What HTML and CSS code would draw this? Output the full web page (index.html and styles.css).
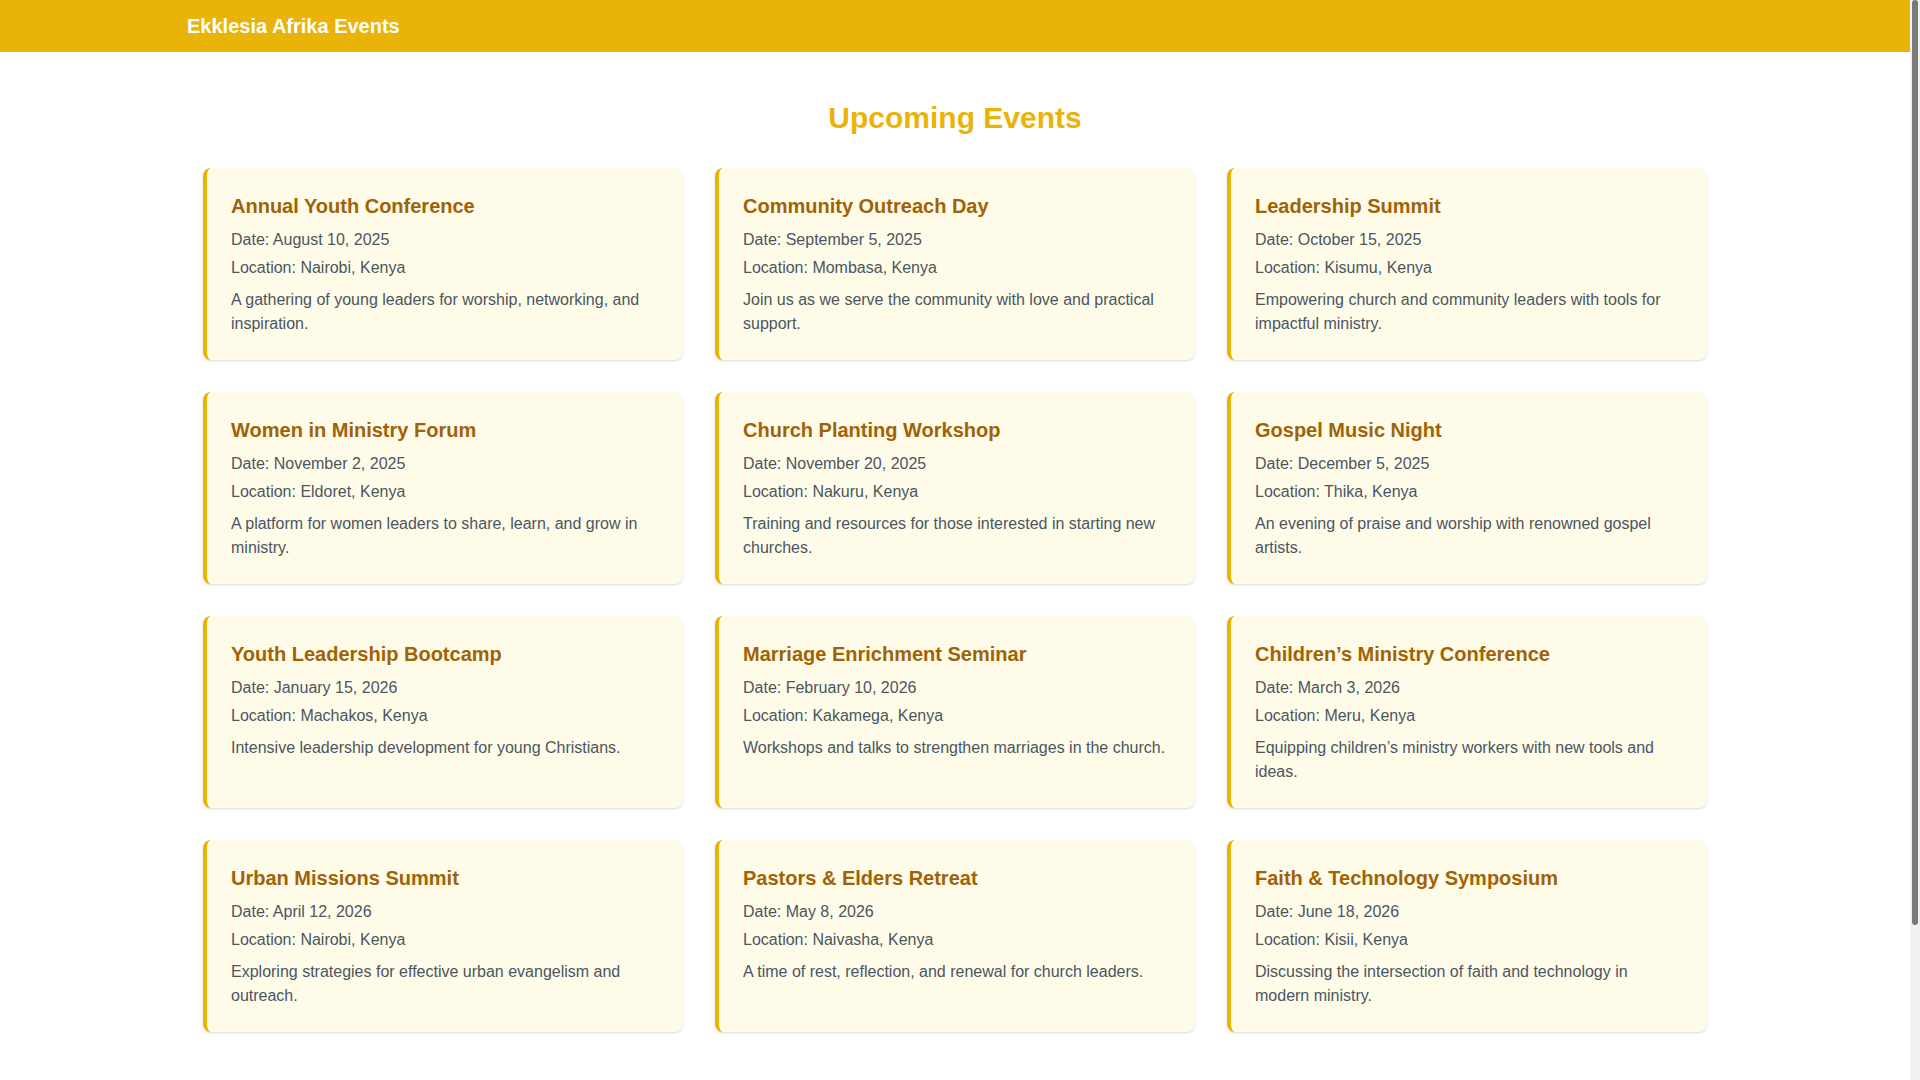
FILE: index.html
```html
<!DOCTYPE html>
<html>
<head>
    <meta charset="utf-8">
    <title>Ekklesia Afrika Events</title>
    <link rel="stylesheet" href="styles.css">
</head>
<body>
    <header class="site-header">
        <div class="header-inner">
            <h1 class="brand">Ekklesia Afrika Events</h1>
        </div>
    </header>

    <main class="main">
        <h2 class="page-title">Upcoming Events</h2>
        <div class="events">
            <div class="event-card">
                <h3 class="event-title">Annual Youth Conference</h3>
                <p class="event-date">Date: August 10, 2025</p>
                <p class="event-location">Location: Nairobi, Kenya</p>
                <p class="event-desc">A gathering of young leaders for worship, networking, and inspiration.</p>
            </div>
            <div class="event-card">
                <h3 class="event-title">Community Outreach Day</h3>
                <p class="event-date">Date: September 5, 2025</p>
                <p class="event-location">Location: Mombasa, Kenya</p>
                <p class="event-desc">Join us as we serve the community with love and practical support.</p>
            </div>
            <div class="event-card">
                <h3 class="event-title">Leadership Summit</h3>
                <p class="event-date">Date: October 15, 2025</p>
                <p class="event-location">Location: Kisumu, Kenya</p>
                <p class="event-desc">Empowering church and community leaders with tools for impactful ministry.</p>
            </div>
            <div class="event-card">
                <h3 class="event-title">Women in Ministry Forum</h3>
                <p class="event-date">Date: November 2, 2025</p>
                <p class="event-location">Location: Eldoret, Kenya</p>
                <p class="event-desc">A platform for women leaders to share, learn, and grow in ministry.</p>
            </div>
            <div class="event-card">
                <h3 class="event-title">Church Planting Workshop</h3>
                <p class="event-date">Date: November 20, 2025</p>
                <p class="event-location">Location: Nakuru, Kenya</p>
                <p class="event-desc">Training and resources for those interested in starting new churches.</p>
            </div>
            <div class="event-card">
                <h3 class="event-title">Gospel Music Night</h3>
                <p class="event-date">Date: December 5, 2025</p>
                <p class="event-location">Location: Thika, Kenya</p>
                <p class="event-desc">An evening of praise and worship with renowned gospel artists.</p>
            </div>
            <div class="event-card">
                <h3 class="event-title">Youth Leadership Bootcamp</h3>
                <p class="event-date">Date: January 15, 2026</p>
                <p class="event-location">Location: Machakos, Kenya</p>
                <p class="event-desc">Intensive leadership development for young Christians.</p>
            </div>
            <div class="event-card">
                <h3 class="event-title">Marriage Enrichment Seminar</h3>
                <p class="event-date">Date: February 10, 2026</p>
                <p class="event-location">Location: Kakamega, Kenya</p>
                <p class="event-desc">Workshops and talks to strengthen marriages in the church.</p>
            </div>
            <div class="event-card">
                <h3 class="event-title">Children’s Ministry Conference</h3>
                <p class="event-date">Date: March 3, 2026</p>
                <p class="event-location">Location: Meru, Kenya</p>
                <p class="event-desc">Equipping children’s ministry workers with new tools and ideas.</p>
            </div>
            <div class="event-card">
                <h3 class="event-title">Urban Missions Summit</h3>
                <p class="event-date">Date: April 12, 2026</p>
                <p class="event-location">Location: Nairobi, Kenya</p>
                <p class="event-desc">Exploring strategies for effective urban evangelism and outreach.</p>
            </div>
            <div class="event-card">
                <h3 class="event-title">Pastors &amp; Elders Retreat</h3>
                <p class="event-date">Date: May 8, 2026</p>
                <p class="event-location">Location: Naivasha, Kenya</p>
                <p class="event-desc">A time of rest, reflection, and renewal for church leaders.</p>
            </div>
            <div class="event-card">
                <h3 class="event-title">Faith &amp; Technology Symposium</h3>
                <p class="event-date">Date: June 18, 2026</p>
                <p class="event-location">Location: Kisii, Kenya</p>
                <p class="event-desc">Discussing the intersection of faith and technology in modern ministry.</p>
            </div>
        </div>
    </main>

    <!-- the window's scrollbar, as the screenshot shows it -->
    <div class="scrollbar">
        <div class="scrollbar-thumb"></div>
    </div>
</body>
</html>
```

FILE: styles.css
```css
* {
    box-sizing: border-box;
}

html,
body {
    overflow: hidden;
}

body {
    margin: 0 10px 0 0;
    font-family: "Liberation Sans", Arial, sans-serif;
    background-color: #ffffff;
    color: #4b5563;
}

.site-header {
    background-color: #eab308;
    padding: 12px 0;
}

.header-inner {
    max-width: 1536px;
    margin: 0 auto;
}

.brand {
    margin: 0;
    font-size: 20px;
    line-height: 28px;
    font-weight: bold;
    color: #ffffff;
}

.main {
    max-width: 1536px;
    margin: 0 auto;
    padding: 48px 16px;
}

.page-title {
    margin: 0 0 32px;
    text-align: center;
    font-size: 30px;
    line-height: 36px;
    font-weight: bold;
    color: #eab308;
}

.events {
    display: grid;
    grid-template-columns: repeat(3, 1fr);
    gap: 32px;
}

.event-card {
    background-color: #fefce8;
    border-left: 4px solid #eab308;
    border-radius: 8px;
    padding: 24px;
    box-shadow: 0 1px 3px rgba(0, 0, 0, 0.1), 0 1px 2px rgba(0, 0, 0, 0.06);
}

.event-title {
    margin: 0 0 8px;
    font-size: 20px;
    line-height: 28px;
    font-weight: bold;
    color: #a16207;
}

.event-date,
.event-location,
.event-desc {
    margin: 0;
    font-size: 16px;
    line-height: 24px;
    color: #4b5563;
}

.event-date {
    margin-bottom: 4px;
}

.event-location {
    margin-bottom: 8px;
}

.scrollbar {
    position: fixed;
    top: 0;
    right: 0;
    width: 10px;
    height: 100%;
    background-color: #f1f1f1;
}

.scrollbar-thumb {
    margin: 0 2px;
    height: 925px;
    border-radius: 3px;
    background-color: #7a7a7a;
}
```
